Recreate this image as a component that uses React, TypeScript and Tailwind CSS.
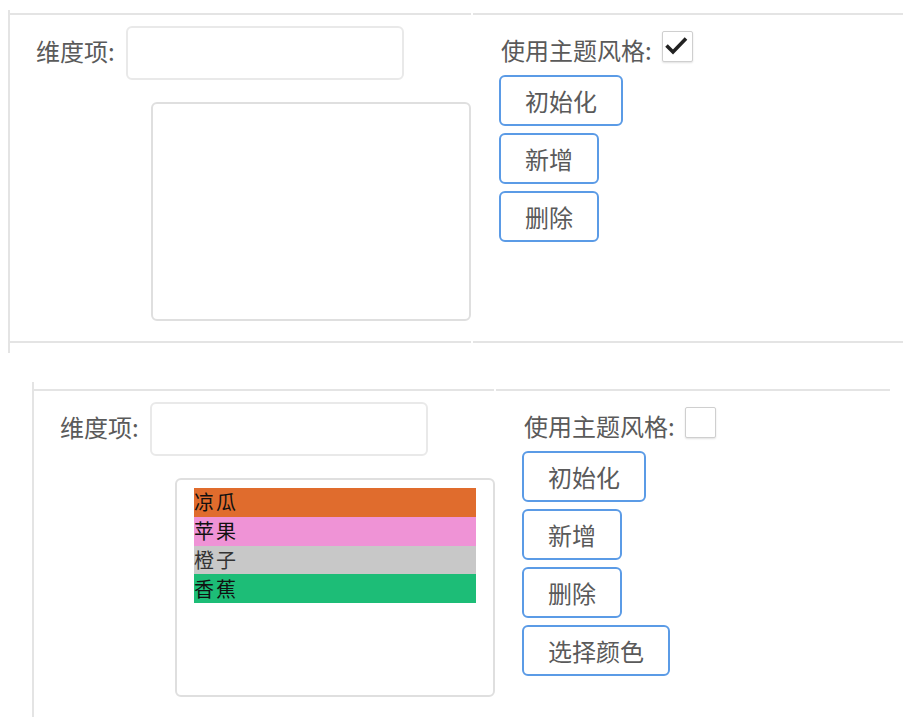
import React from "react";

type Item = { label: string; bg: string; color: string };

function Checkbox({ checked }: { checked: boolean }) {
  return (
    <div className="w-[31px] h-[31px] border border-[#cfcfcf] rounded-[2px] bg-white shadow-[0_1px_2px_rgba(0,0,0,0.12)] flex-none">
      {checked && (
        <svg width="29" height="29" viewBox="0 0 29 29">
          <path d="M3.5 13.5 L10 20 L23 6.5" fill="none" stroke="#222" strokeWidth="3.6" strokeLinejoin="miter" />
        </svg>
      )}
    </div>
  );
}

function Btn({ children }: { children: React.ReactNode }) {
  return (
    <button className="h-[51px] px-[24px] border-2 border-[#5b9be6] rounded-[6px] bg-white text-[24px] leading-[32px] text-[#5a5a5a] self-start">
      {children}
    </button>
  );
}

function Panel({
  checked,
  items,
  buttons,
  outer,
  leftW,
}: {
  checked: boolean;
  items: Item[];
  buttons: string[];
  outer: string;
  leftW: string;
}) {
  return (
    <div className={outer}>
      <div className="flex gap-[2px]">
        <div className={`${leftW} flex-none border-t-2 border-b-2 border-[#e4e4e4] pt-[11px] pb-[20px]`}>
          <div className="flex items-center pl-[26px]">
            <span className="text-[24px] leading-[32px] text-[#5a5a5a] mt-[-4px]">维度项:</span>
            <div className="ml-[11px] w-[278px] h-[54px] border-2 border-[#e9e9e9] rounded-[6px] bg-white" />
          </div>
          <div className="mt-[22px] ml-[141px] w-[320px] h-[219px] border-2 border-[#dfdfdf] rounded-[6px] bg-white px-[17px] pt-[8px]">
            {items.map((it) => (
              <div
                key={it.label}
                className="h-[28.75px] flex items-center text-[20px] leading-[28px] tracking-[2px] font-['Noto_Sans_CJK_SC',sans-serif]"
                style={{ backgroundColor: it.bg, color: it.color }}
              >
                {it.label}
              </div>
            ))}
          </div>
        </div>
        <div className="flex-1 border-t-2 border-b-2 border-[#e4e4e4] pt-[16px] pl-[26px]">
          <div className="flex items-start">
            <span className="ml-[2px] mt-[3px] text-[24px] leading-[32px] text-[#5a5a5a]">使用主题风格:</span>
            <div className="ml-[10px]">
              <Checkbox checked={checked} />
            </div>
          </div>
          <div className="mt-[9px] flex flex-col gap-[7px]">
            {buttons.map((b) => (
              <Btn key={b}>{b}</Btn>
            ))}
          </div>
        </div>
      </div>
    </div>
  );
}

export default function App() {
  return (
    <div className="w-[903px] h-[717px] overflow-hidden bg-white font-['Noto_Sans_CJK_SC',sans-serif]">
      <Panel
        outer="ml-[8px] mt-[10px] w-[940px] border-l-2 border-[#e4e4e4] pt-[3px] pb-[10px]"
        leftW="w-[461px]"
        checked={true}
        items={[]}
        buttons={["初始化", "新增", "删除"]}
      />
      <Panel
        outer="ml-[32px] mt-[29px] w-[858px] border-l-2 border-[#e4e4e4] pt-[7px] pb-[10px]"
        leftW="w-[460px]"
        checked={false}
        items={[
          { label: "凉瓜", bg: "#e06c2d", color: "#111" },
          { label: "苹果", bg: "#ef93d6", color: "#111" },
          { label: "橙子", bg: "#c8c8c8", color: "#333" },
          { label: "香蕉", bg: "#1dbd77", color: "#111" },
        ]}
        buttons={["初始化", "新增", "删除", "选择颜色"]}
      />
    </div>
  );
}
